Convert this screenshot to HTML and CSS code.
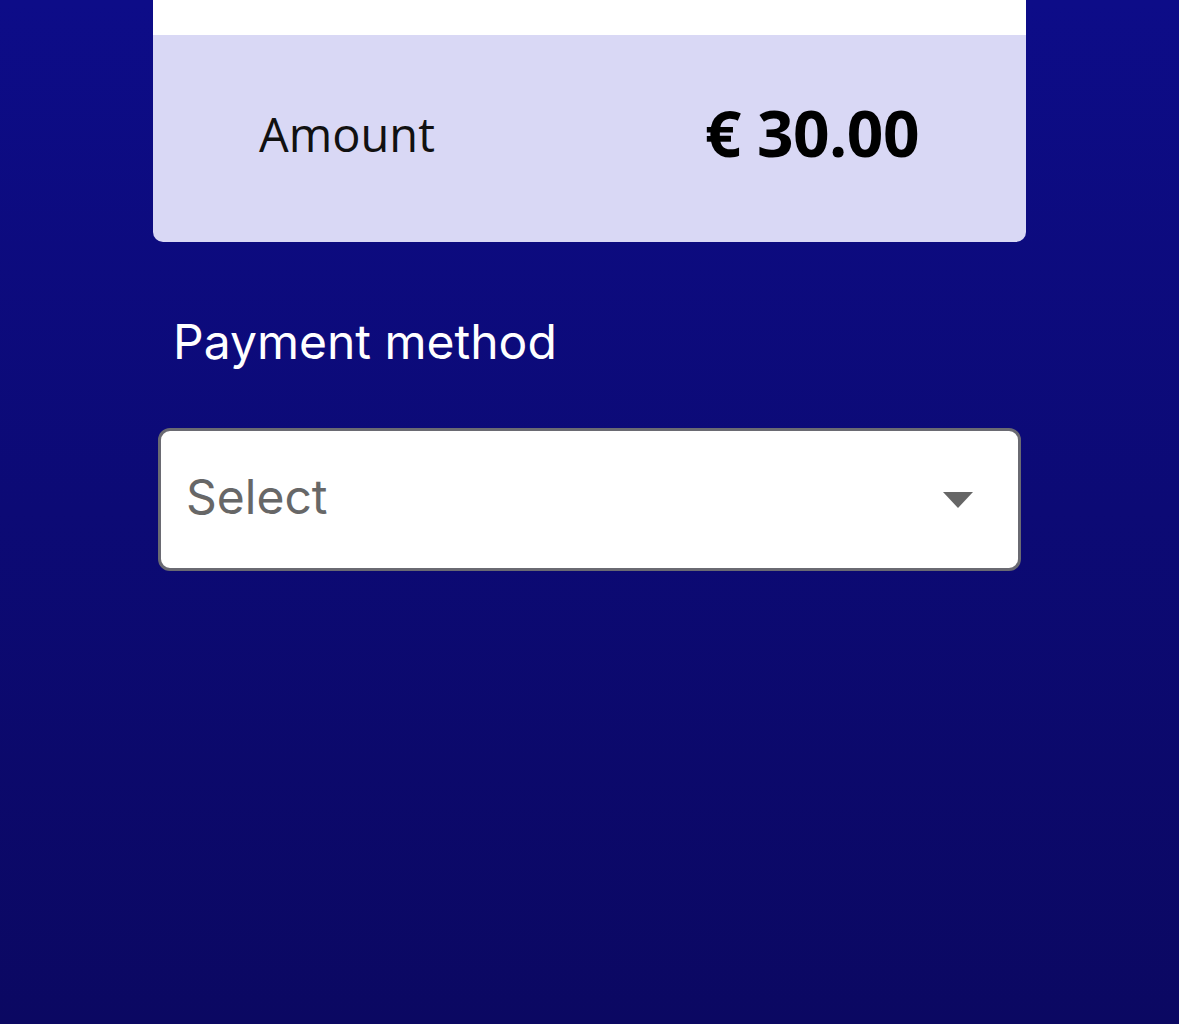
FILE: index.html
```html
<!DOCTYPE html>
<html lang="en">
<head>
    <meta charset="UTF-8">
    <meta name="viewport" content="width=device-width, initial-scale=1.0">
    <title>Payment</title>
    <link rel="stylesheet" href="styles.css">
</head>
<body>
    <div class="container">
        <div class="summary-card">
            <div class="card-top"></div>
            <div class="amount-row">
                <span class="amount-label">Amount</span>
                <span class="amount-value">€ 30.00</span>
            </div>
        </div>

        <div class="field">
            <label class="field-label">Payment method</label>
            <div class="select-box">
                <span class="select-text">Select</span>
                <svg class="select-arrow" width="30" height="16" viewBox="0 0 30 16">
                    <polygon points="0,0 30,0 15,16" />
                </svg>
            </div>
        </div>
    </div>
</body>
</html>
```

FILE: styles.css
```css
* { margin: 0; padding: 0; box-sizing: border-box; }
html, body {
    height: 100%;
}
body {
    font-family: Inter, Roboto, sans-serif;
    background: linear-gradient(to bottom, #0d0c88 0%, #0b0862 100%);
    min-height: 100vh;
}
.container {
    width: 873px;
    margin-left: 153px;
}
.summary-card {
    background: #d9d8f5;
    border-radius: 0 0 10px 10px;
    overflow: hidden;
}
.card-top {
    height: 35px;
    background: #ffffff;
}
.amount-row {
    height: 207px;
    display: flex;
    align-items: center;
    justify-content: space-between;
    padding: 0 107px 0 106px;
}
.amount-label {
    font-family: "Open Sans", sans-serif;
    font-size: 47px;
    color: #111;
    margin-top: -10px;
}
.amount-value {
    font-family: "Open Sans", sans-serif;
    font-weight: bold;
    font-size: 64px;
    letter-spacing: -0.5px;
    color: #000;
    margin-top: -12px;
}
.field {
    padding: 0 5px;
}
.field-label {
    display: block;
    color: #ffffff;
    font-size: 48px;
    margin: 72px 0 0 15px;
    line-height: 56px;
}
.select-box {
    margin-top: 58px;
    height: 143px;
    background: #ffffff;
    border: 3px solid #6a6a72;
    border-radius: 12px;
    display: flex;
    align-items: center;
    justify-content: space-between;
    padding: 0 45px 0 25px;
}
.select-text {
    font-size: 48px;
    color: #676767;
    margin-top: -6px;
}
.select-arrow {
    fill: #666666;
}
```
